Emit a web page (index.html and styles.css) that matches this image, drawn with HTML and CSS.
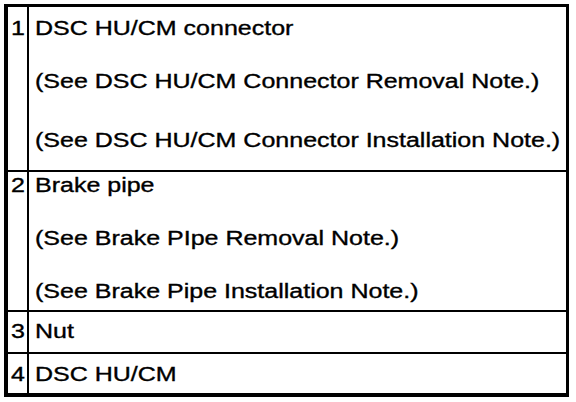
FILE: index.html
```html
<!DOCTYPE html>
<html lang="en">
<head>
<meta charset="utf-8">
<title>DSC HU/CM parts</title>
<link rel="stylesheet" href="styles.css">
</head>
<body>
<div class="parts">
  <div class="cell num r1"><div class="ln">1</div></div>
  <div class="cell desc r1">
    <div class="ln">DSC HU/CM connector</div>
    <div class="ln g1">(See DSC HU/CM Connector Removal Note.)</div>
    <div class="ln g2">(See DSC HU/CM Connector Installation Note.)</div>
  </div>
  <div class="cell num r2"><div class="ln">2</div></div>
  <div class="cell desc r2">
    <div class="ln">Brake pipe</div>
    <div class="ln g3">(See Brake PIpe Removal Note.)</div>
    <div class="ln g3">(See Brake Pipe Installation Note.)</div>
  </div>
  <div class="cell num r3"><div class="ln">3</div></div>
  <div class="cell desc r3"><div class="ln">Nut</div></div>
  <div class="cell num r4"><div class="ln">4</div></div>
  <div class="cell desc r4"><div class="ln">DSC HU/CM</div></div>
</div>
</body>
</html>
```
FILE: styles.css
```css
html, body {
  margin: 0;
  padding: 0;
  background: #fff;
  overflow: hidden;
}
body {
  font-family: "Liberation Sans", Arial, sans-serif;
  font-size: 20px;
  color: #000;
  -webkit-text-stroke: 0.35px #000;
}
.parts {
  margin: 4px 0 0 4px;
  width: 558px;
  border-style: solid;
  border-color: #000;
  border-width: 3px 3px 4px 4px;
  display: grid;
  grid-template-columns: 21px 1fr;
  grid-template-rows: 165px 140px 42px 39px;
}
.cell {
  box-sizing: border-box;
  min-width: 0;
}
.num {
  border-right: 2px solid #000;
  padding-left: 3px;
}
.desc {
  padding-left: 6px;
}
.r1, .r2, .r3 {
  border-bottom: 2px solid #000;
}
.r1 { padding-top: 10px; }
.r2 { padding-top: 2px; }
.r3 { padding-top: 8px; }
.r4 { padding-top: 9px; }
.ln {
  width: max-content;
  height: 22px;
  line-height: 22px;
  white-space: nowrap;
  transform: scaleX(1.25);
  transform-origin: left center;
}
.g1 { margin-top: 31px; }
.g2 { margin-top: 37px; }
.g3 { margin-top: 31px; }
```
